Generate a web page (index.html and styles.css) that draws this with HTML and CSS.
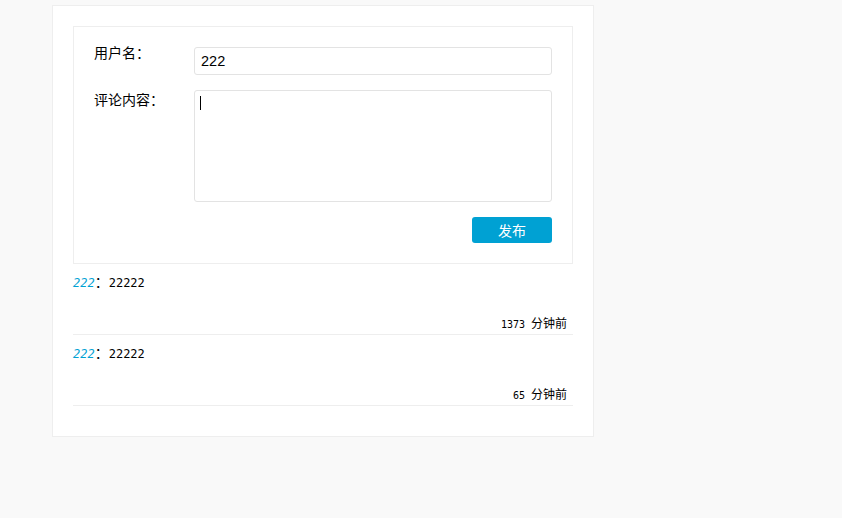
FILE: index.html
```html
<!DOCTYPE html>
<html lang="zh-CN">
<head>
<meta charset="utf-8">
<title>评论</title>
<link rel="stylesheet" href="styles.css">
</head>
<body>
<div class="panel">
  <form class="form-box">
    <div class="row row-name">
      <label class="label label-name">用户名：</label>
      <input class="field" type="text" value="222">
    </div>
    <div class="row row-content">
      <label class="label label-content">评论内容：</label>
      <div class="area-wrap">
        <textarea class="field area"></textarea>
        <span class="caret"></span>
      </div>
    </div>
    <div class="row row-btn">
      <button class="btn" type="button">发布</button>
    </div>
  </form>
  <ul class="comments">
    <li class="comment">
      <p class="c-body"><span class="c-name">222</span>：<span class="c-text">22222</span></p>
      <p class="c-time"><span class="c-num">1373 </span>分钟前</p>
    </li>
    <li class="comment">
      <p class="c-body"><span class="c-name">222</span>：<span class="c-text">22222</span></p>
      <p class="c-time"><span class="c-num">65 </span>分钟前</p>
    </li>
  </ul>
</div>
</body>
</html>
```

FILE: styles.css
```css
html, body {
  margin: 0;
  padding: 0;
  background: #f9f9f9;
}
body {
  padding: 5px 0 0 52px;
  font-family: "Liberation Sans", "Noto Sans CJK SC", sans-serif;
  font-size: 14px;
  color: #000;
}
.panel {
  box-sizing: border-box;
  width: 542px;
  height: 432px;
  background: #fff;
  border: 1px solid #eeeeee;
  padding: 20px;
}
.form-box {
  box-sizing: border-box;
  width: 500px;
  border: 1px solid #eeeeee;
  padding: 20px;
  margin: 0;
  display: flex;
  flex-direction: column;
  gap: 15px;
}
.row {
  display: flex;
  align-items: flex-start;
}
.label {
  width: 100px;
  flex: none;
  font-family: "Noto Sans CJK SC", sans-serif;
  font-size: 14px;
  line-height: 20px;
  color: #000;
}
.label-name { margin-top: -5px; }
.label-content { margin-top: -1px; }
.field {
  box-sizing: border-box;
  width: 358px;
  height: 28px;
  border: 1px solid #e3e3e3;
  border-radius: 3px;
  padding: 0 6px;
  margin: 0;
  font-family: "Liberation Sans", sans-serif;
  font-size: 14.5px;
  color: #000;
  background: #fff;
  outline: none;
}
.area-wrap {
  position: relative;
  width: 358px;
  height: 112px;
}
.area {
  height: 112px;
  padding: 5px 6px;
  resize: none;
  display: block;
  line-height: 16px;
}
.caret {
  position: absolute;
  left: 6px;
  top: 6px;
  width: 1px;
  height: 14px;
  background: #000;
}
.row-btn {
  justify-content: flex-end;
}
.btn {
  width: 80px;
  height: 26px;
  border: none;
  border-radius: 3px;
  background: #00a1d3;
  color: #fff;
  font-family: "Noto Sans CJK SC", sans-serif;
  font-size: 14px;
  line-height: 26px;
  padding: 0;
}
.comments {
  list-style: none;
  margin: 0;
  padding: 0 0 10px 0;
}
.comment {
  box-sizing: border-box;
  height: 71px;
  border-bottom: 1px solid #eeeeee;
  padding-top: 7px;
}
.c-body {
  margin: 0 0 20px 0;
  line-height: 20px;
  font-family: "Noto Sans CJK SC", sans-serif;
  font-size: 14px;
}
.c-name, .c-text {
  font-family: "DejaVu Sans Mono", monospace;
  font-size: 12px;
}
.c-name {
  color: #00a1d3;
  font-style: italic;
}
.c-time {
  margin: 0;
  line-height: 20px;
  text-align: right;
  padding-right: 6px;
  font-family: "Noto Sans CJK SC", sans-serif;
  font-size: 12px;
}
.c-num {
  font-family: "DejaVu Sans Mono", monospace;
  font-size: 10px;
}
```
